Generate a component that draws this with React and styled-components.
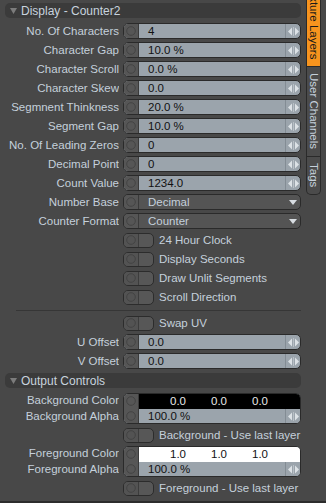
import React from 'react';
import styled, { createGlobalStyle } from 'styled-components';

const Global = createGlobalStyle`
  html, body { margin: 0; padding: 0; background: #484848; }
  body { font-family: "Liberation Sans", Arial, sans-serif; font-size: 11px; }
`;

const Frame = styled.div`
  width: 326px;
  height: 503px;
  box-sizing: border-box;
  display: flex;
  overflow: hidden;
  background: #484848;
  border-bottom: 2px solid #2c2c2c;
`;

const Main = styled.div`
  flex: 1;
  display: flex;
  flex-direction: column;
  gap: 3px;
  padding: 2px 5px 0 0;
  min-width: 0;
`;

const Header = styled.div`
  margin: 1px 0 2px 5px;
  height: 15px;
  background: #3b3b3b;
  border-radius: 5px;
  display: flex;
  align-items: center;
  gap: 4px;
  padding-left: 5px;
  color: #c8d3de;
  font-size: 12px;
`;

const Row = styled.div`
  display: grid;
  grid-template-columns: 119px 178px;
  column-gap: 4px;
  height: ${p => p.$h || 16}px;
  align-items: center;
`;

const Label = styled.div`
  text-align: right;
  color: #c5d0db;
  white-space: nowrap;
  overflow: hidden;
  font-size: 11.5px;
`;

const LabelStack = styled.div`
  display: flex;
  flex-direction: column;
  align-self: stretch;
  line-height: 15.5px;
`;

const Field = styled.div`
  height: ${p => p.$h || 16}px;
  box-sizing: border-box;
  border: 1px solid #2a2a2a;
  border-radius: 5px;
  display: flex;
  overflow: hidden;
  background: ${p => (p.$drop ? '#545454' : '#9ba4ac')};
`;

const Key = styled.div`
  width: 14px;
  flex: none;
  background: #565656;
  border-right: 1px solid #3a3a3a;
  display: flex;
  flex-direction: column;
  align-items: center;
  justify-content: space-around;
`;

const Value = styled.div`
  flex: 1;
  padding-left: 9px;
  color: ${p => (p.$drop ? '#c5d0db' : '#111')};
  line-height: 14px;
  font-size: 11.5px;
  white-space: nowrap;
  overflow: hidden;
`;

const Spin = styled.div`
  width: 14px;
  flex: none;
  border-left: 1px solid ${p => (p.$drop ? 'transparent' : '#838c94')};
  display: flex;
  align-items: center;
  justify-content: center;
`;

const Column = styled.div`
  flex: 1;
  display: flex;
  flex-direction: column;
`;

const ColorRow = styled.div`
  height: 15px;
  background: ${p => p.$bg};
  color: ${p => p.$fg};
  display: grid;
  grid-template-columns: repeat(3, 41px);
  padding-left: 31px;
  line-height: 15px;
  font-size: 11.5px;
`;

const AlphaRow = styled.div`
  flex: 1;
  display: flex;
  background: #9ba4ac;
`;

const ToggleLine = styled.div`
  display: flex;
  align-items: center;
  gap: 5px;
  color: #c5d0db;
  font-size: 11.5px;
  white-space: nowrap;
`;

const Toggle = styled.div`
  width: 31px;
  height: 15px;
  box-sizing: border-box;
  border: 1px solid #2c2c2c;
  border-radius: 5px;
  overflow: hidden;
  display: flex;
  background: #575757;
`;

const ToggleKnob = styled.div`
  width: 14px;
  background: #535353;
  border-right: 1px solid #3c3c3c;
  display: flex;
  align-items: center;
  justify-content: center;
`;

const Separator = styled.div`
  height: 1px;
  margin: 2px 0 1px 16px;
  background: #363636;
`;

const TabStrip = styled.div`
  width: 20px;
  flex: none;
  box-sizing: border-box;
  padding-right: 5px;
  margin-top: -22px;
  display: flex;
  flex-direction: column;
`;

const Tab = styled.div`
  height: ${p => p.$h}px;
  box-sizing: border-box;
  border: 1px solid #2a2a2a;
  border-top: none;
  background: ${p => (p.$active ? '#f7941e' : '#4b4b4b')};
  color: ${p => (p.$active ? '#1a1a1a' : '#c5d0db')};
  border-radius: ${p => (p.$last ? '0 0 5px 5px' : '0')};
  writing-mode: vertical-rl;
  display: flex;
  align-items: center;
  justify-content: center;
  font-size: 11.5px;
  white-space: nowrap;
`;

const Circle = () => (
  <svg width="10" height="10" viewBox="0 0 10 10">
    <circle cx="5" cy="5" r="4.3" fill="none" stroke="#444" strokeWidth="1" />
  </svg>
);

const SpinArrows = () => (
  <svg width="11" height="9" viewBox="0 0 11 9">
    <polygon points="4,0.5 4,8.5 0,4.5" fill="#dde2e6" />
    <rect x="5" y="0" width="1" height="9" fill="#b9c0c6" />
    <polygon points="7,0.5 7,8.5 11,4.5" fill="#dde2e6" />
  </svg>
);

const DownArrow = () => (
  <svg width="8" height="5" viewBox="0 0 8 5">
    <polygon points="0,0 8,0 4,5" fill="#d8dde2" />
  </svg>
);

const Caret = () => (
  <svg width="7" height="6" viewBox="0 0 7 6">
    <polygon points="0,0 7,0 3.5,6" fill="#7c7c7c" />
  </svg>
);

const NumberRow = ({ label, value }) => (
  <Row>
    <Label>{label}</Label>
    <Field>
      <Key><Circle /></Key>
      <Value>{value}</Value>
      <Spin><SpinArrows /></Spin>
    </Field>
  </Row>
);

const DropRow = ({ label, value }) => (
  <Row>
    <Label>{label}</Label>
    <Field $drop>
      <Key><Circle /></Key>
      <Value $drop>{value}</Value>
      <Spin $drop><DownArrow /></Spin>
    </Field>
  </Row>
);

const ToggleRow = ({ label }) => (
  <Row>
    <span />
    <ToggleLine>
      <Toggle>
        <ToggleKnob><Circle /></ToggleKnob>
      </Toggle>
      {label}
    </ToggleLine>
  </Row>
);

const ColorBlock = ({ name, bg, fg, values }) => (
  <Row $h={31}>
    <LabelStack>
      <Label>{name} Color</Label>
      <Label>{name} Alpha</Label>
    </LabelStack>
    <Field $h={31}>
      <Key><Circle /><Circle /></Key>
      <Column>
        <ColorRow $bg={bg} $fg={fg}>
          {values.map((v, i) => <span key={i}>{v}</span>)}
        </ColorRow>
        <AlphaRow>
          <Value>100.0 %</Value>
          <Spin><SpinArrows /></Spin>
        </AlphaRow>
      </Column>
    </Field>
  </Row>
);

const numbers = [
  ['No. Of Characters', '4'],
  ['Character Gap', '10.0 %'],
  ['Character Scroll', '0.0 %'],
  ['Character Skew', '0.0'],
  ['Segmnent Thinkness', '20.0 %'],
  ['Segment Gap', '10.0 %'],
  ['No. Of Leading Zeros', '0'],
  ['Decimal Point', '0'],
  ['Count Value', '1234.0'],
];

export default function App() {
  return (
    <>
      <Global />
      <Frame>
        <Main>
          <Header><Caret />Display - Counter2</Header>
          {numbers.map(([l, v]) => <NumberRow key={l} label={l} value={v} />)}
          <DropRow label="Number Base" value="Decimal" />
          <DropRow label="Counter Format" value="Counter" />
          <ToggleRow label="24 Hour Clock" />
          <ToggleRow label="Display Seconds" />
          <ToggleRow label="Draw Unlit Segments" />
          <ToggleRow label="Scroll Direction" />
          <Separator />
          <ToggleRow label="Swap UV" />
          <NumberRow label="U Offset" value="0.0" />
          <NumberRow label="V Offset" value="0.0" />
          <Header><Caret />Output Controls</Header>
          <ColorBlock name="Background" bg="#000" fg="#e8e8e8" values={['0.0', '0.0', '0.0']} />
          <ToggleRow label="Background - Use last layer" />
          <ColorBlock name="Foreground" bg="#fff" fg="#111" values={['1.0', '1.0', '1.0']} />
          <ToggleRow label="Foreground - Use last layer" />
        </Main>
        <TabStrip>
          <Tab $active $h={89}>Texture Layers</Tab>
          <Tab $h={90}>User Channels</Tab>
          <Tab $h={38} $last>Tags</Tab>
        </TabStrip>
      </Frame>
    </>
  );
}
